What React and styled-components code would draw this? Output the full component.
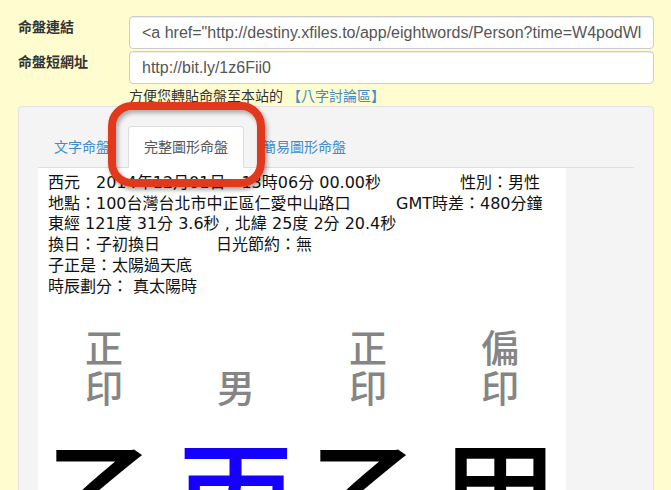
import React from 'react';
import styled, { createGlobalStyle } from 'styled-components';

const GlobalStyle = createGlobalStyle`
  html, body {
    margin: 0;
    padding: 0;
    background: #fffccf;
    font-family: "Liberation Sans", "Noto Sans CJK TC", sans-serif;
    color: #333;
    overflow: hidden;
  }
`;

const Page = styled.div`
  position: relative;
  height: 490px;
  padding: 16px 17px 0 18px;
  box-sizing: border-box;
  overflow: hidden;
`;

const FormRow = styled.div`
  display: grid;
  grid-template-columns: 111px 1fr;
  margin-bottom: 2px;
`;

const Label = styled.label`
  font-size: 14px;
  font-weight: bold;
  line-height: 20px;
  padding-top: ${(p) => p.$top || 0}px;
`;

const Input = styled.input`
  height: 33px;
  box-sizing: border-box;
  width: 100%;
  padding: 6px 12px;
  font-family: "Liberation Sans", "Noto Sans CJK TC", sans-serif;
  font-size: 16px;
  color: #555;
  background: #fff;
  border: 1px solid #ccc;
  border-radius: 4px;
  box-shadow: inset 0 1px 1px rgba(0, 0, 0, 0.075);
  outline: none;
`;

const Help = styled.div`
  margin-left: 111px;
  font-size: 14px;
  line-height: 20px;
  color: #333;
  a {
    color: #428bca;
    text-decoration: none;
    margin-left: 4px;
  }
`;

const Panel = styled.div`
  background: #f4f4f4;
  border: 1px solid #e3e3e3;
  border-radius: 4px;
  padding: 19px 19px 0 19px;
  height: 420px;
`;

const Tabs = styled.ul`
  display: flex;
  list-style: none;
  margin: 0;
  padding: 0;
  border-bottom: 1px solid #ddd;
`;

const Tab = styled.li`
  margin-right: 2px;
  margin-bottom: -1px;
  padding: 10px 15px;
  font-size: 14px;
  line-height: 20px;
  border: 1px solid ${(p) => (p.$active ? '#ddd' : 'transparent')};
  border-bottom-color: transparent;
  border-radius: 4px 4px 0 0;
  background: ${(p) => (p.$active ? '#fff' : 'transparent')};
  color: ${(p) => (p.$active ? '#555' : '#428bca')};
`;

const Sheet = styled.div`
  width: 528px;
  background: #fff;
  padding: 5px 10px 0;
  box-sizing: border-box;
  height: 340px;
  overflow: hidden;
`;

const InfoRow = styled.div`
  display: flex;
  font-family: "DejaVu Sans", "Noto Sans CJK TC", sans-serif;
  font-size: 16px;
  line-height: 20.7px;
  color: #111;
  white-space: pre;
`;

const Cell = styled.span`
  width: ${(p) => (p.$w ? `${p.$w}px` : 'auto')};
  flex-shrink: 0;
`;

const Chart = styled.div`
  display: grid;
  grid-template-columns: repeat(4, 1fr);
  margin: 29px -10px 0;
`;

const Gods = styled.div`
  display: flex;
  flex-direction: column;
  justify-content: flex-end;
  align-items: center;
  height: 80px;
  font-size: 38px;
  line-height: 40px;
  font-weight: 500;
  color: #858585;
  font-family: "Noto Sans CJK TC", sans-serif;
`;

const Stem = styled.div`
  text-align: center;
  margin-top: 25px;
  font-size: 118px;
  font-weight: 500;
  line-height: 1;
  color: ${(p) => p.$color || '#000'};
  font-family: "Noto Sans CJK TC", sans-serif;
`;

const Marker = styled.div`
  position: absolute;
  left: 108px;
  top: 102px;
  width: 157px;
  height: 85px;
  box-sizing: border-box;
  border: 8px solid #e0391c;
  border-radius: 24px;
  box-shadow: 2px 3px 4px rgba(0, 0, 0, 0.35), inset 2px 3px 4px rgba(0, 0, 0, 0.3);
  pointer-events: none;
`;

const columns = [
  { gods: ['正', '印'], stem: '乙' },
  { gods: ['男'], stem: '丙', color: '#1500ff' },
  { gods: ['正', '印'], stem: '乙' },
  { gods: ['偏', '印'], stem: '甲' },
];

export default function App() {
  return (
    <Page>
      <GlobalStyle />
      <FormRow>
        <Label $top={1}>命盤連結</Label>
        <Input readOnly value={'<a href="http://destiny.xfiles.to/app/eightwords/Person?time=W4podWl0ZXN0In0%3D">'} />
      </FormRow>
      <FormRow>
        <Label $top={1}>命盤短網址</Label>
        <Input readOnly value="http://bit.ly/1z6Fii0" />
      </FormRow>
      <Help>
        方便您轉貼命盤至本站的<a href="#">【八字討論區】</a>
      </Help>
      <Panel>
        <Tabs>
          <Tab>文字命盤</Tab>
          <Tab $active>完整圖形命盤</Tab>
          <Tab>簡易圖形命盤</Tab>
        </Tabs>
        <Sheet>
          <InfoRow>
            <Cell $w={412}>西元　2014年12月01日　13時06分 00.00秒</Cell>
            <Cell>性別：男性</Cell>
          </InfoRow>
          <InfoRow>
            <Cell $w={348}>地點：100台灣台北市中正區仁愛中山路口</Cell>
            <Cell>GMT時差：480分鐘</Cell>
          </InfoRow>
          <InfoRow>
            <Cell>東經 121度 31分 3.6秒 , 北緯 25度 2分 20.4秒</Cell>
          </InfoRow>
          <InfoRow>
            <Cell $w={168}>換日：子初換日</Cell>
            <Cell>日光節約：無</Cell>
          </InfoRow>
          <InfoRow>
            <Cell>子正是：太陽過天底</Cell>
          </InfoRow>
          <InfoRow>
            <Cell>時辰劃分： 真太陽時</Cell>
          </InfoRow>
          <Chart>
            {columns.map((c, i) => (
              <div key={i}>
                <Gods>
                  {c.gods.map((g, j) => (
                    <span key={j}>{g}</span>
                  ))}
                </Gods>
                <Stem $color={c.color}>{c.stem}</Stem>
              </div>
            ))}
          </Chart>
        </Sheet>
      </Panel>
      <Marker />
    </Page>
  );
}
